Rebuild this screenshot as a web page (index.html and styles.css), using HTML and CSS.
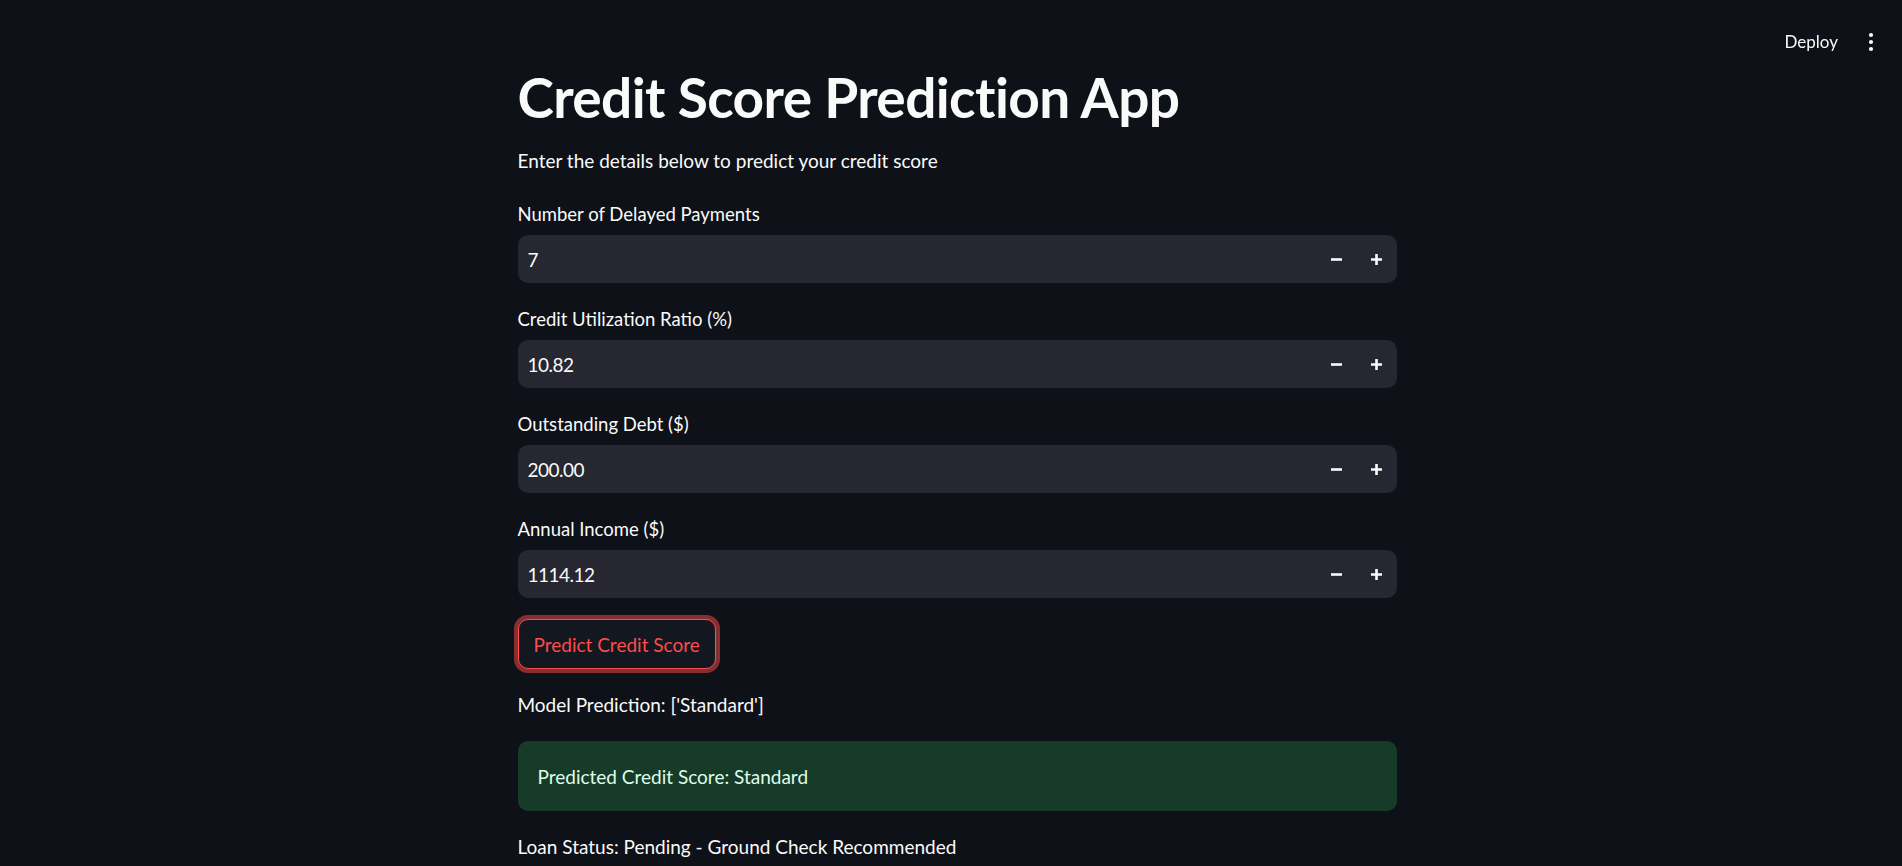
FILE: index.html
```html
<!DOCTYPE html>
<html lang="en">
<head>
<meta charset="utf-8">
<title>Credit Score Prediction App</title>
<link rel="stylesheet" href="styles.css">
</head>
<body>
<header class="topbar">
  <button class="deploy">Deploy</button>
  <button class="menu" aria-label="Main menu">
    <svg width="6" height="20" viewBox="0 0 6 20"><circle cx="3" cy="3" r="2.1" fill="currentColor"/><circle cx="3" cy="10" r="2.1" fill="currentColor"/><circle cx="3" cy="17" r="2.1" fill="currentColor"/></svg>
  </button>
</header>
<main class="main">
  <div class="block">
    <h1 class="title">Credit Score Prediction App</h1>
    <p class="text subtitle">Enter the details below to predict your credit score</p>

    <div class="field">
      <label class="field-label">Number of Delayed Payments</label>
      <div class="num-input">
        <span class="num-value">7</span>
        <div class="steppers">
          <button class="step"><svg width="11" height="11" viewBox="0 0 11 11"><path d="M0 5.5H11" stroke="currentColor" stroke-width="2.6"/></svg></button>
          <button class="step"><svg width="11" height="11" viewBox="0 0 11 11"><path d="M0 5.5H11M5.5 0V11" stroke="currentColor" stroke-width="2.6"/></svg></button>
        </div>
      </div>
    </div>

    <div class="field">
      <label class="field-label">Credit Utilization Ratio (%)</label>
      <div class="num-input">
        <span class="num-value">10.82</span>
        <div class="steppers">
          <button class="step"><svg width="11" height="11" viewBox="0 0 11 11"><path d="M0 5.5H11" stroke="currentColor" stroke-width="2.6"/></svg></button>
          <button class="step"><svg width="11" height="11" viewBox="0 0 11 11"><path d="M0 5.5H11M5.5 0V11" stroke="currentColor" stroke-width="2.6"/></svg></button>
        </div>
      </div>
    </div>

    <div class="field">
      <label class="field-label">Outstanding Debt ($)</label>
      <div class="num-input">
        <span class="num-value">200.00</span>
        <div class="steppers">
          <button class="step"><svg width="11" height="11" viewBox="0 0 11 11"><path d="M0 5.5H11" stroke="currentColor" stroke-width="2.6"/></svg></button>
          <button class="step"><svg width="11" height="11" viewBox="0 0 11 11"><path d="M0 5.5H11M5.5 0V11" stroke="currentColor" stroke-width="2.6"/></svg></button>
        </div>
      </div>
    </div>

    <div class="field">
      <label class="field-label">Annual Income ($)</label>
      <div class="num-input">
        <span class="num-value">1114.12</span>
        <div class="steppers">
          <button class="step"><svg width="11" height="11" viewBox="0 0 11 11"><path d="M0 5.5H11" stroke="currentColor" stroke-width="2.6"/></svg></button>
          <button class="step"><svg width="11" height="11" viewBox="0 0 11 11"><path d="M0 5.5H11M5.5 0V11" stroke="currentColor" stroke-width="2.6"/></svg></button>
        </div>
      </div>
    </div>

    <div class="btn-row">
      <button class="predict">Predict Credit Score</button>
    </div>

    <p class="text">Model Prediction: ['Standard']</p>

    <div class="alert-success">Predicted Credit Score: Standard</div>

    <p class="text">Loan Status: Pending - Ground Check Recommended</p>
  </div>
</main>
</body>
</html>
```

FILE: styles.css
```css
* { box-sizing: border-box; }

html, body {
  margin: 0;
  padding: 0;
  height: 100%;
}

body {
  background: #0e1117;
  color: #fafafa;
  font-family: Lato, "Noto Sans", sans-serif;
  overflow: hidden;
}

button {
  font-family: inherit;
  background: none;
  border: none;
  color: inherit;
  padding: 0;
  cursor: pointer;
}

.topbar {
  position: fixed;
  top: 0;
  left: 0;
  right: 0;
  height: 84px;
  display: flex;
  justify-content: flex-end;
  align-items: flex-start;
  padding: 30px 23px 0 0;
  gap: 25px;
}

.deploy {
  font-size: 17px;
  line-height: 24px;
  color: #fafafa;
}

.menu {
  width: 16px;
  height: 24px;
  display: flex;
  align-items: center;
  justify-content: center;
  color: #fafafa;
}

.main {
  display: flex;
  justify-content: center;
  padding-left: 12px;
}

.block {
  width: 879px;
  padding-top: 69px;
  display: flex;
  flex-direction: column;
  gap: 20px;
}

.title {
  margin: 0;
  font-size: 55px;
  line-height: 56px;
  font-weight: 700;
  letter-spacing: -0.6px;
}

.text {
  margin: 0;
  font-size: 19px;
  line-height: 32px;
}

.subtitle {
  margin-bottom: 1px;
}

.field {
  display: flex;
  flex-direction: column;
}

.field-label {
  height: 32px;
  margin-bottom: 5px;
  display: flex;
  align-items: center;
  font-size: 18.5px;
  color: #fafafa;
}

.num-input {
  height: 48px;
  background: #262730;
  border-radius: 10px;
  display: flex;
  align-items: center;
  justify-content: space-between;
  padding-left: 10px;
}

.num-value {
  font-size: 19px;
  letter-spacing: -0.5px;
  color: #fafafa;
}

.steppers {
  display: flex;
  height: 100%;
}

.step {
  width: 40px;
  height: 100%;
  display: flex;
  align-items: center;
  justify-content: center;
  color: #fafafa;
}

.btn-row {
  display: flex;
  margin-top: 1px;
}

.predict {
  height: 50px;
  padding: 0 15px;
  border: 1px solid #ff4b4b;
  border-radius: 10px;
  background: #131720;
  color: #ff4b4b;
  font-size: 19px;
  box-shadow: 0 0 0 4px rgba(255, 75, 75, 0.5);
}

.alert-success {
  height: 70px;
  display: flex;
  align-items: center;
  padding: 0 20px;
  border-radius: 10px;
  background: #173b29;
  color: #dffde9;
  font-size: 19px;
}
```
